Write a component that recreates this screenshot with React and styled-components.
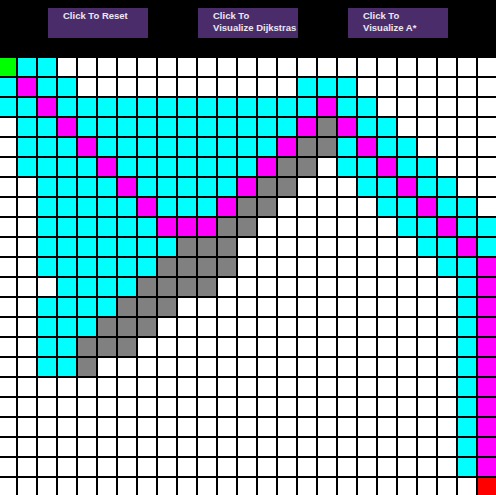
import React from "react";
import styled, { createGlobalStyle } from "styled-components";

const Global = createGlobalStyle`
  html, body { margin: 0; padding: 0; background: #000; overflow: hidden; }
  body { font-family: "Liberation Sans", Arial, sans-serif; }
`;

const Page = styled.div`
  width: 496px;
  height: 495px;
  overflow: hidden;
  background: #000;
`;

const Toolbar = styled.div`
  height: 56px;
  box-sizing: border-box;
  display: flex;
  align-items: flex-start;
  gap: 50px;
  padding: 8px 0 0 48px;
`;

const Button = styled.button`
  width: 100px;
  height: 30px;
  box-sizing: border-box;
  margin: 0;
  border: none;
  background: #4b2c6b;
  color: #ece8f2;
  font-family: "Liberation Sans", Arial, sans-serif;
  font-weight: bold;
  font-size: 9.5px;
  line-height: 12px;
  text-align: left;
  white-space: nowrap;
  padding: 2px 0 0 15px;
  display: flex;
  flex-direction: column;
  justify-content: flex-start;
  cursor: pointer;
`;

const Board = styled.div`
  display: grid;
  grid-template-columns: repeat(25, 18px);
  grid-auto-rows: 18px;
  gap: 2px;
  padding-top: 2px;
  margin-left: -2px;
  width: 498px;
`;

const COLORS = {
  ".": "#ffffff",
  c: "#00ffff",
  m: "#ff00ff",
  g: "#808080",
  s: "#00ff00",
  e: "#ff0000",
};

const Cell = styled.div`
  width: 18px;
  height: 18px;
  background: ${(p) => COLORS[p.$kind]};
`;

const RLE = [
  "s2c22.",
  "cm2c11.3c7.",
  "2cm13cm2c6.",
  ".2cm11cmgm2c5.",
  ".3cm9cm2gcm2c4.",
  ".4cm7cm2g.2cm2c3.",
  "2.4cm5cm2g3.2cm2c2.",
  "2.5cm3cm2g5.2cm2c.",
  "2.6c3m2g7.2cm2c",
  "2.7c3g9.2cmc",
  "2.6c4g10.2cm",
  "3.4c4g12.cm",
  "2.4c3g14.cm",
  "2.3c3g15.cm",
  "2.2c3g16.cm",
  "2.2cg18.cm",
  "23.cm",
  "23.cm",
  "23.cm",
  "23.cm",
  "23.cm",
  "24.e",
];

const decode = (s) => {
  let out = "";
  s.replace(/(\d*)([a-z.])/g, (_, n, ch) => {
    out += ch.repeat(n ? parseInt(n, 10) : 1);
    return "";
  });
  return (out + ".".repeat(25)).slice(0, 25);
};

const GRID = RLE.map(decode);

export default function App() {
  return (
    <Page>
      <Global />
      <Toolbar>
        <Button>
          <span>Click To Reset</span>
        </Button>
        <Button>
          <span>Click To</span>
          <span>Visualize Dijkstras</span>
        </Button>
        <Button>
          <span>Click To</span>
          <span>Visualize A*</span>
        </Button>
      </Toolbar>
      <Board>
        {GRID.map((row, r) =>
          row.split("").map((k, c) => <Cell key={`${r}-${c}`} $kind={k} />)
        )}
      </Board>
    </Page>
  );
}
